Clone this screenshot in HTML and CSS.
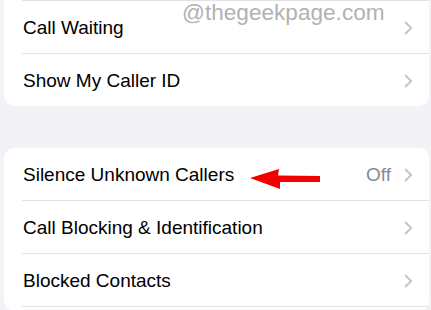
FILE: index.html
```html
<!DOCTYPE html>
<html>
<head>
<meta charset="utf-8">
<link rel="stylesheet" href="styles.css">
</head>
<body>
<div class="page">
  <div class="card card-cut">
    <div class="row sep-top">
      <span class="label">Call Waiting</span>
      <span class="trail"><svg class="chev" viewBox="0 0 9 14"><path d="M1.5 1.5 L7.2 7 L1.5 12.5"/></svg></span>
    </div>
    <div class="row">
      <span class="label">Show My Caller ID</span>
      <span class="trail"><svg class="chev" viewBox="0 0 9 14"><path d="M1.5 1.5 L7.2 7 L1.5 12.5"/></svg></span>
    </div>
  </div>

  <div class="card card-open">
    <div class="row">
      <span class="label">Silence Unknown Callers</span>
      <span class="trail"><span class="value">Off</span><svg class="chev" viewBox="0 0 9 14"><path d="M1.5 1.5 L7.2 7 L1.5 12.5"/></svg></span>
      <svg class="arrow" viewBox="0 0 72 22"><polygon points="0,10 29,1 28,7.5 70,8 70,14 30,14 30,21"/></svg>
    </div>
    <div class="row">
      <span class="label">Call Blocking &amp; Identification</span>
      <span class="trail"><svg class="chev" viewBox="0 0 9 14"><path d="M1.5 1.5 L7.2 7 L1.5 12.5"/></svg></span>
    </div>
    <div class="row">
      <span class="label">Blocked Contacts</span>
      <span class="trail"><svg class="chev" viewBox="0 0 9 14"><path d="M1.5 1.5 L7.2 7 L1.5 12.5"/></svg></span>
    </div>
    <div class="row"></div>
  </div>

  <div class="watermark">@thegeekpage.com</div>
</div>
</body>
</html>
```
FILE: styles.css
```css
* { box-sizing: border-box; }
html, body {
  margin: 0;
  padding: 0;
  background: #f2f2f7;
  overflow: hidden;
}
body {
  width: 431px;
  height: 310px;
  font-family: "Liberation Sans", Arial, sans-serif;
}
.page {
  position: relative;
  padding: 0 2px 0 4px;
  display: flex;
  flex-direction: column;
  gap: 42px;
}
.card {
  background: #ffffff;
  border-radius: 10px;
  display: flex;
  flex-direction: column;
}
.card-cut {
  border-top-left-radius: 0;
  border-top-right-radius: 0;
}
.row {
  position: relative;
  height: 53px;
  display: flex;
  align-items: center;
  justify-content: space-between;
  padding: 1px 16px 0 19px;
  border-bottom: 1px solid #e3e3e6;
  border-image: linear-gradient(to right, transparent 19px, #e3e3e6 19px) 1;
  border-top: 0;
}
.card .row:last-child {
  border-bottom: 0;
  height: 52px;
}
.card-open .row:last-child { height: 4px; }
.sep-top {
  border-top: 1px solid #e3e3e6;
  border-image: linear-gradient(to right, transparent 19px, #e3e3e6 19px) 1;
}
.card-cut .row.sep-top { height: 54px; }
.label {
  font-size: 19px;
  color: #000;
}
.trail {
  display: flex;
  align-items: center;
  gap: 13px;
}
.value {
  font-size: 19px;
  color: #8a8a8e;
}
.chev {
  width: 9px;
  height: 14px;
  fill: none;
  stroke: #c4c4c7;
  stroke-width: 1.8;
  stroke-linecap: round;
  stroke-linejoin: round;
}
.arrow {
  position: absolute;
  left: 246px;
  top: 20px;
  width: 72px;
  height: 22px;
  fill: #f20000;
}
.watermark {
  position: absolute;
  left: 182px;
  top: 0;
  font-size: 22.6px;
  color: #b2b2b2;
}
```
